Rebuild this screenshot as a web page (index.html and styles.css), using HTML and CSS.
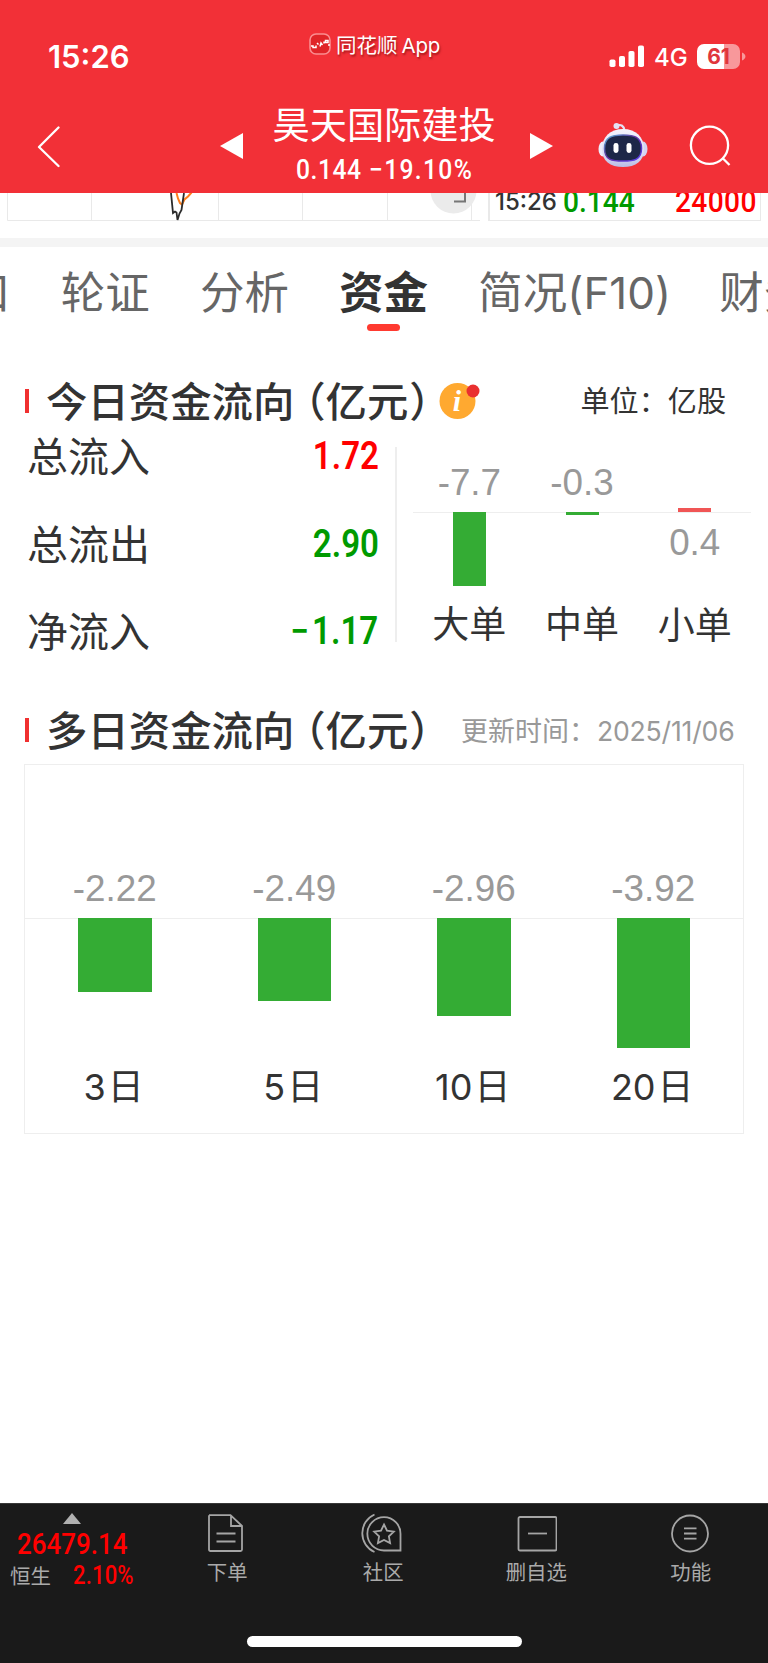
FILE: index.html
```html
<!DOCTYPE html>
<html lang="zh-CN">
<head>
<meta charset="utf-8">
<title>昊天国际建投</title>
<link rel="stylesheet" href="styles.css">
</head>
<body>
<div class="phone">
  <header class="header">
    <div class="status">
      <div class="time">15:26</div>
      <div class="app">
        <svg class="app-icon" width="22" height="22" viewBox="0 0 22 22"><rect x="1" y="1" width="20" height="20" rx="6" fill="#e02428" stroke="#fa8d90" stroke-width="1.6"/><path d="M2 13h2v1.500h3v-2M8 10l1.500 1.500M11 13.500l1-3.500 1.500 2M15 8.500v2M16.500 7.500h2.500v2h-2.500zM19 12h2" fill="none" stroke="#fff" stroke-width="1.500"/></svg>
        <span class="app-name">同花顺<span class="app-latin">App</span></span>
      </div>
      <div class="signals">
        <svg width="36" height="22" viewBox="0 0 36 22" fill="#fff"><rect x="0.500" y="14.500" width="6" height="7.500" rx="1.800"/><rect x="10" y="11" width="6" height="11" rx="1.800"/><rect x="19.500" y="6" width="6" height="16" rx="1.800"/><rect x="29" y="0.500" width="6" height="21.500" rx="1.800"/></svg>
        <span class="net">4G</span>
        <span class="battery">61</span>
        <svg class="nub" width="4" height="9" viewBox="0 0 4 9"><path d="M0 0.500C4.500 2 4.500 7 0 8.500z" fill="#f8989b"/></svg>
      </div>
    </div>
    <div class="nav">
      <svg class="back" width="24" height="42" viewBox="0 0 24 42"><path d="M21.500 1.500L2 21l19.500 19" fill="none" stroke="#fff" stroke-width="2.300" stroke-linecap="round" stroke-linejoin="round"/></svg>
      <svg class="prev" width="23" height="26" viewBox="0 0 23 26"><path d="M0 13L23 0v26z" fill="#fff"/></svg>
      <div class="stock">
        <div class="stock-name">昊天国际建投</div>
        <div class="stock-quote"><span class="din price">0.144</span><span class="din change">−19.10%</span></div>
      </div>
      <svg class="next" width="23" height="26" viewBox="0 0 23 26"><path d="M23 13L0 0v26z" fill="#fff"/></svg>
      <svg class="robot" width="50" height="46" viewBox="0 0 50 46">
        <defs>
          <linearGradient id="shell" x1="0" y1="0" x2="0" y2="1"><stop offset="0" stop-color="#f4f4fd"/><stop offset=".65" stop-color="#dcdcf5"/><stop offset="1" stop-color="#b9bce4"/></linearGradient>
          <linearGradient id="rim" x1="0" y1="0" x2="1" y2="1"><stop offset="0" stop-color="#5bb9d8"/><stop offset=".45" stop-color="#6030a0"/><stop offset="1" stop-color="#5a3ff0"/></linearGradient>
        </defs>
        <path d="M19 3.500c4-1.500 7 .5 7.500 5" fill="none" stroke="#e4e2f5" stroke-width="2.200"/>
        <circle cx="18.500" cy="4" r="3" fill="#e4e2f5"/>
        <ellipse cx="5" cy="27" rx="4.500" ry="7.500" fill="#ededfb"/>
        <ellipse cx="45" cy="27" rx="4.500" ry="7.500" fill="#d3d4f2"/>
        <path d="M25 7C38 7 46 15 46 27S38 45 25 45 4 39 4 27 12 7 25 7z" fill="url(#shell)"/>
        <path d="M25 13c11 0 18.500 2 18.500 13.500S36 39 25 39 6.500 38 6.500 26.500 14 13 25 13z" fill="#1d2748" stroke="url(#rim)" stroke-width="1.500"/>
        <rect x="15.500" y="21" width="5" height="10" rx="2.400" fill="#fff"/><rect x="28.500" y="21" width="5" height="10" rx="2.400" fill="#fff"/>
      </svg>
      <svg class="search" width="42" height="42" viewBox="0 0 42 42" fill="none" stroke="#fff" stroke-width="2.300"><circle cx="20.500" cy="20.300" r="18.600"/><path d="M33.500 33l7 7"/></svg>
    </div>
  </header>

  <section class="quote-strip">
    <svg class="trend" width="480" height="29" viewBox="0 0 480 29" fill="none">
      <path d="M7.500 0v27.500H480M91.500 0v27M218.500 0v27M302.500 0v27M387.500 0v27M471.500 0v27" stroke="#e9e9e9"/>
      <circle cx="453.500" cy="-2.500" r="23" fill="#ebebeb"/>
      <path d="M176.500 0l1.500 5.500 2 4.500 2 1.500 2.500-5 3.500-3 3.500-4" stroke="#ff7e1c" stroke-width="2"/>
      <path d="M171 0l2 20 2-1.500 1.500 1 1 7.500 2-6.500 2-3.500 2.500-17" stroke="#2b2b2b" stroke-width="1.800"/>
      <path d="M454 8.500h11V0" stroke="#777" stroke-width="2"/>
    </svg>
    <div class="ticks"><span class="tick-time">15:26</span><span class="din tick-price">0.144</span><span class="din tick-vol">24000</span></div>
  </section>

  <nav class="tabs">
    <span class="tab">盘口</span><span class="tab">轮证</span><span class="tab">分析</span><span class="tab tab-on">资金</span><span class="tab">简况<span class="latin">(F10)</span></span><span class="tab tab-last">财务</span>
  </nav>

  <section class="today">
    <div class="heading">
      <h2>今日资金流向<span class="po">（</span>亿元<span class="pc">）</span></h2>
      <svg class="info" width="42" height="40" viewBox="0 0 42 40"><circle cx="18.500" cy="21" r="18" fill="#ffa930"/><circle cx="34" cy="11" r="6.500" fill="#e93030"/><text x="18" y="31" text-anchor="middle" class="info-i">i</text></svg>
      <span class="unit">单位：亿股</span>
    </div>
    <div class="today-body">
      <div class="flows">
        <div class="flow"><span>总流入</span><span class="din red">1.72</span></div>
        <div class="flow"><span>总流出</span><span class="din green">2.90</span></div>
        <div class="flow"><span>净流入</span><span class="din green"><span class="minus">−</span>1.17</span></div>
      </div>
      <div class="orders">
        <div class="order"><div class="above num">-7.7</div><div class="below"><div class="bar" style="height:73.5px"></div></div><div class="cap">大单</div></div>
        <div class="order"><div class="above num">-0.3</div><div class="below"><div class="bar" style="height:3px"></div></div><div class="cap">中单</div></div>
        <div class="order"><div class="above"><div class="bar up" style="height:4px"></div></div><div class="below num">0.4</div><div class="cap">小单</div></div>
      </div>
    </div>
  </section>

  <section class="multi">
    <div class="heading">
      <h2>多日资金流向<span class="po">（</span>亿元<span class="pc">）</span></h2>
      <span class="updated">更新时间：<span class="date">2025/11/06</span></span>
    </div>
    <div class="days">
      <div class="day"><div class="day-top num">-2.22</div><div class="day-low"><div class="bar" style="height:73.500px"></div></div><div class="cap"><span class="latin">3</span>日</div></div>
      <div class="day"><div class="day-top num">-2.49</div><div class="day-low"><div class="bar" style="height:82.500px"></div></div><div class="cap"><span class="latin">5</span>日</div></div>
      <div class="day"><div class="day-top num">-2.96</div><div class="day-low"><div class="bar" style="height:97.500px"></div></div><div class="cap"><span class="latin">10</span>日</div></div>
      <div class="day"><div class="day-top num">-3.92</div><div class="day-low"><div class="bar" style="height:129.500px"></div></div><div class="cap"><span class="latin">20</span>日</div></div>
    </div>
  </section>

  <footer class="footer">
    <div class="dock">
      <div class="index">
        <svg class="caret" width="18" height="11" viewBox="0 0 18 11"><path d="M9 0l9 11H0z" fill="#b0b0b0"/></svg>
        <div class="din index-value">26479.14</div>
        <div class="index-row"><span>恒生</span><span class="din index-pct">2.10%</span></div>
      </div>
      <div class="item"><svg width="42" height="42" viewBox="0 0 42 42"><path d="M3 3.200h21.500L36 14v23.500q0 1.500-1.500 1.500H4.500Q3 39 3 37.500V3.200M25 3.500V14h11M10.500 21.500h19M10.500 29.500h19"/></svg><span>下单</span></div>
      <div class="item item-club"><svg width="42" height="42" viewBox="0 0 42 42"><path d="M13.500 2.500A20.500 20.500 0 0 0 13.500 40M23 5.200A16.500 16.500 0 0 0 23 38.500H39.500V22A16.500 16.500 0 0 0 23 5.200zM23 12.500l3 6.200 6.800 1-4.900 4.600 1.200 6.800-6.100-3.200-6.100 3.200 1.200-6.800-4.900-4.600 6.800-1z"/></svg><span>社区</span></div>
      <div class="item"><svg width="42" height="42" viewBox="0 0 42 42"><rect x="3.500" y="5" width="38" height="33.500" rx="1.500"/><path d="M13 21.500h19"/></svg><span>删自选</span></div>
      <div class="item"><svg width="42" height="42" viewBox="0 0 42 42"><circle cx="20" cy="21.500" r="18"/><path d="M14 16.300h12.500M14 21.500h12.500M14 26.700h12.500"/></svg><span>功能</span></div>
    </div>
    <div class="home"></div>
  </footer>
</div>
</body>
</html>
```

FILE: styles.css
```css
* { box-sizing: border-box; }
body { margin: 0; background: #fff; }
svg { display: block; flex: none; }
.phone {
  width: 768px; height: 1663px; overflow: hidden;
  display: flex; flex-direction: column;
  font-family: Inter, "Noto Sans CJK SC", sans-serif;
  color: #333; white-space: nowrap;
}
.din { font-family: Roboto, "Noto Sans CJK SC", sans-serif; font-weight: 500; display: inline-block; flex: none; transform: scaleX(.88); transform-origin: left center; }
.red { color: #f00; }
.green { color: #009a00; }
.num { font-family: "Liberation Sans", sans-serif; font-size: 36.800px; line-height: 40px; color: #999; }
.latin { font-family: Inter, sans-serif; }

.header { height: 192.500px; flex: none; background: #f23037; color: #fff; }
.status { height: 90px; display: flex; align-items: flex-start; }
.time { width: 309px; padding: 37px 0 0 48px; font-size: 31px; line-height: 40px; font-weight: 600; }
.app { width: 300px; padding-top: 31px; display: flex; align-items: flex-start; font-size: 20.500px; line-height: 30px; text-shadow: 1px 2px 2px rgba(90, 0, 0, .5); }
.app-icon { margin: 2px 5px 0 0; }
.app-latin { margin-left: 4px; letter-spacing: -.2px; }
.signals { display: flex; padding-top: 44px; }
.signals > svg:first-child { margin-top: 1px; }
.net { width: 43px; padding-left: 9px; font-size: 24px; line-height: 27px; font-weight: 500; }
.battery { width: 43px; height: 25px; margin-left: 9px; border-radius: 7px; background: linear-gradient(90deg, #fff 27px, #f8989b 27px); color: #e0363c; font-size: 21px; line-height: 25px; font-weight: 700; text-align: center; }
.nub { margin: 8px 0 0 2px; }
.nav { height: 102px; display: flex; }
.back { margin: 36px 0 0 36.500px; }
.prev { margin: 43px 0 0 159.500px; }
.stock { width: 287px; padding-top: 11px; }
.stock-name { padding-left: 29.500px; font-size: 37.200px; line-height: 50px; }
.stock-quote { display: flex; padding-left: 53px; font-size: 28px; line-height: 38px; }
.price { width: 73px; letter-spacing: .6px; }
.change { letter-spacing: 1.500px; }
.next { margin-top: 43px; }
.robot { margin: 32px 0 0 44.500px; }
.search { margin: 35px 0 0 41.500px; }

.quote-strip { height: 54.500px; flex: none; display: flex; border-bottom: 9px solid #f4f4f4; overflow: hidden; }
.ticks { width: 273px; height: 28px; margin-left: 8px; border: solid #e9e9e9; border-width: 0 1px 1px 2px; display: flex; align-items: flex-start; }
.tick-time { width: 68px; padding-left: 5px; margin-top: -7px; font-size: 24px; line-height: 32px; font-weight: 500; }
.tick-price { width: 112px; margin-left: 6px; margin-top: -12px; font-size: 32px; line-height: 40px; color: #009a00; }
.tick-vol { margin-top: -12px; font-size: 32px; line-height: 40px; letter-spacing: .4px; color: #f00; }

.tabs { height: 113px; flex: none; display: flex; gap: 50.200px; margin-left: -78.500px; padding-top: 16px; font-size: 44.500px; line-height: 60px; color: #666; }
.tab { flex: none; }
.tab-last { margin-left: -2px; }
.tab-on { color: #333; font-weight: 700; display: flex; flex-direction: column; align-items: center; }
.tab-on::after { content: ""; width: 33px; height: 6.500px; margin-top: 1px; border-radius: 3.500px; background: #ff3a30; }
.tab .latin { font-size: 44px; }

.heading { display: flex; align-items: center; height: 60px; }
.heading::before { content: ""; width: 4px; height: 24.500px; margin-left: 25px; background: #f03030; }
h2 { margin: 1px 0 0 17px; width: 393px; font-size: 41.400px; line-height: 60px; font-weight: 500; }
.po, .pc { font-feature-settings: "halt"; }
.po { margin-left: 10.500px; }
.pc { margin-left: 1px; }
.today { height: 340px; flex: none; padding-top: 11px; }
.info { margin-top: -2px; }
.info-i { font: italic bold 30px "Liberation Serif", serif; fill: #fff; }
.unit { margin: -4px 0 0 99.500px; font-size: 29.100px; }
.today-body { display: flex; height: 230px; }
.flows { width: 378.500px; padding-left: 27px; }
.flow { height: 87.700px; padding-top: 1px; display: flex; justify-content: space-between; font-size: 41px; line-height: 50px; }
.flow .din { margin-top: -1px; font-size: 38px; line-height: 50px; transform: scaleX(.87); transform-origin: right center; font-weight: 600; }
.minus { margin-right: 4px; }
.orders { display: flex; width: 356px; height: 195px; margin: 16px 0 0 16px; padding-left: 16.500px; border-left: 2px solid #eee; }
.order { width: 112.700px; flex: none; text-align: center; }
.above { height: 66px; padding-top: 16px; border-bottom: 1px solid #eee; display: flex; flex-direction: column; align-items: center; }
.above .bar { margin-top: auto; }
.below { height: 75px; }
.below.num { padding-top: 10px; }
.below .bar { margin-top: -1px; }
.bar { width: 33px; margin-left: auto; margin-right: auto; background: #34ac34; flex: none; }
.bar.up { background: #f05555; }
.order .cap { padding-top: 13px; font-size: 37px; line-height: 50px; }

.multi { flex: 1; }
.multi h2 { width: 415px; }
.updated { font-size: 27px; color: #999; margin-top: -1px; }
.date { font-size: 26.600px; letter-spacing: -.2px; margin-left: 1px; }
.days { width: 720px; height: 370px; margin: 4px 0 0 24px; border: 1px solid #eee; display: flex; }
.day { flex: 1; text-align: center; }
.day-top { height: 154px; padding-top: 104px; border-bottom: 1px solid #eee; }
.day-low { height: 144px; }
.day-low .bar { width: 73.500px; margin-top: -1px; }
.day .cap { font-size: 36px; line-height: 50px; padding-right: 2px; }
.day .cap .latin { margin-right: 2px; }

.footer { height: 160px; flex: none; background: #1a1a1a; border-top: 1px solid #383838; color: #aaa; }
.dock { display: flex; height: 132px; }
.index { width: 150px; padding-top: 9px; }
.caret { margin-left: 63px; }
.index-value { margin-left: 17px; margin-top: 2px; font-size: 30px; line-height: 36px; color: #f00; display: block; transform: scaleX(.865); }
.index-row { display: flex; padding: 2px 0 0 10px; font-size: 20.500px; line-height: 26px; }
.index-pct { margin-left: 22px; margin-top: -1px; font-size: 25px; color: #f00; letter-spacing: .2px; }
.item { width: 154.500px; padding-top: 8px; display: flex; flex-direction: column; align-items: center; font-size: 20.400px; line-height: 28px; }
.item-club { padding-left: 3px; }
.item-club svg { margin-left: -2px; }
.item svg { fill: none; stroke: #a5a5a5; stroke-width: 1.800; margin-bottom: 5px; }
.home { width: 275px; height: 11px; margin-left: 247px; border-radius: 6px; background: #fff; }
```
